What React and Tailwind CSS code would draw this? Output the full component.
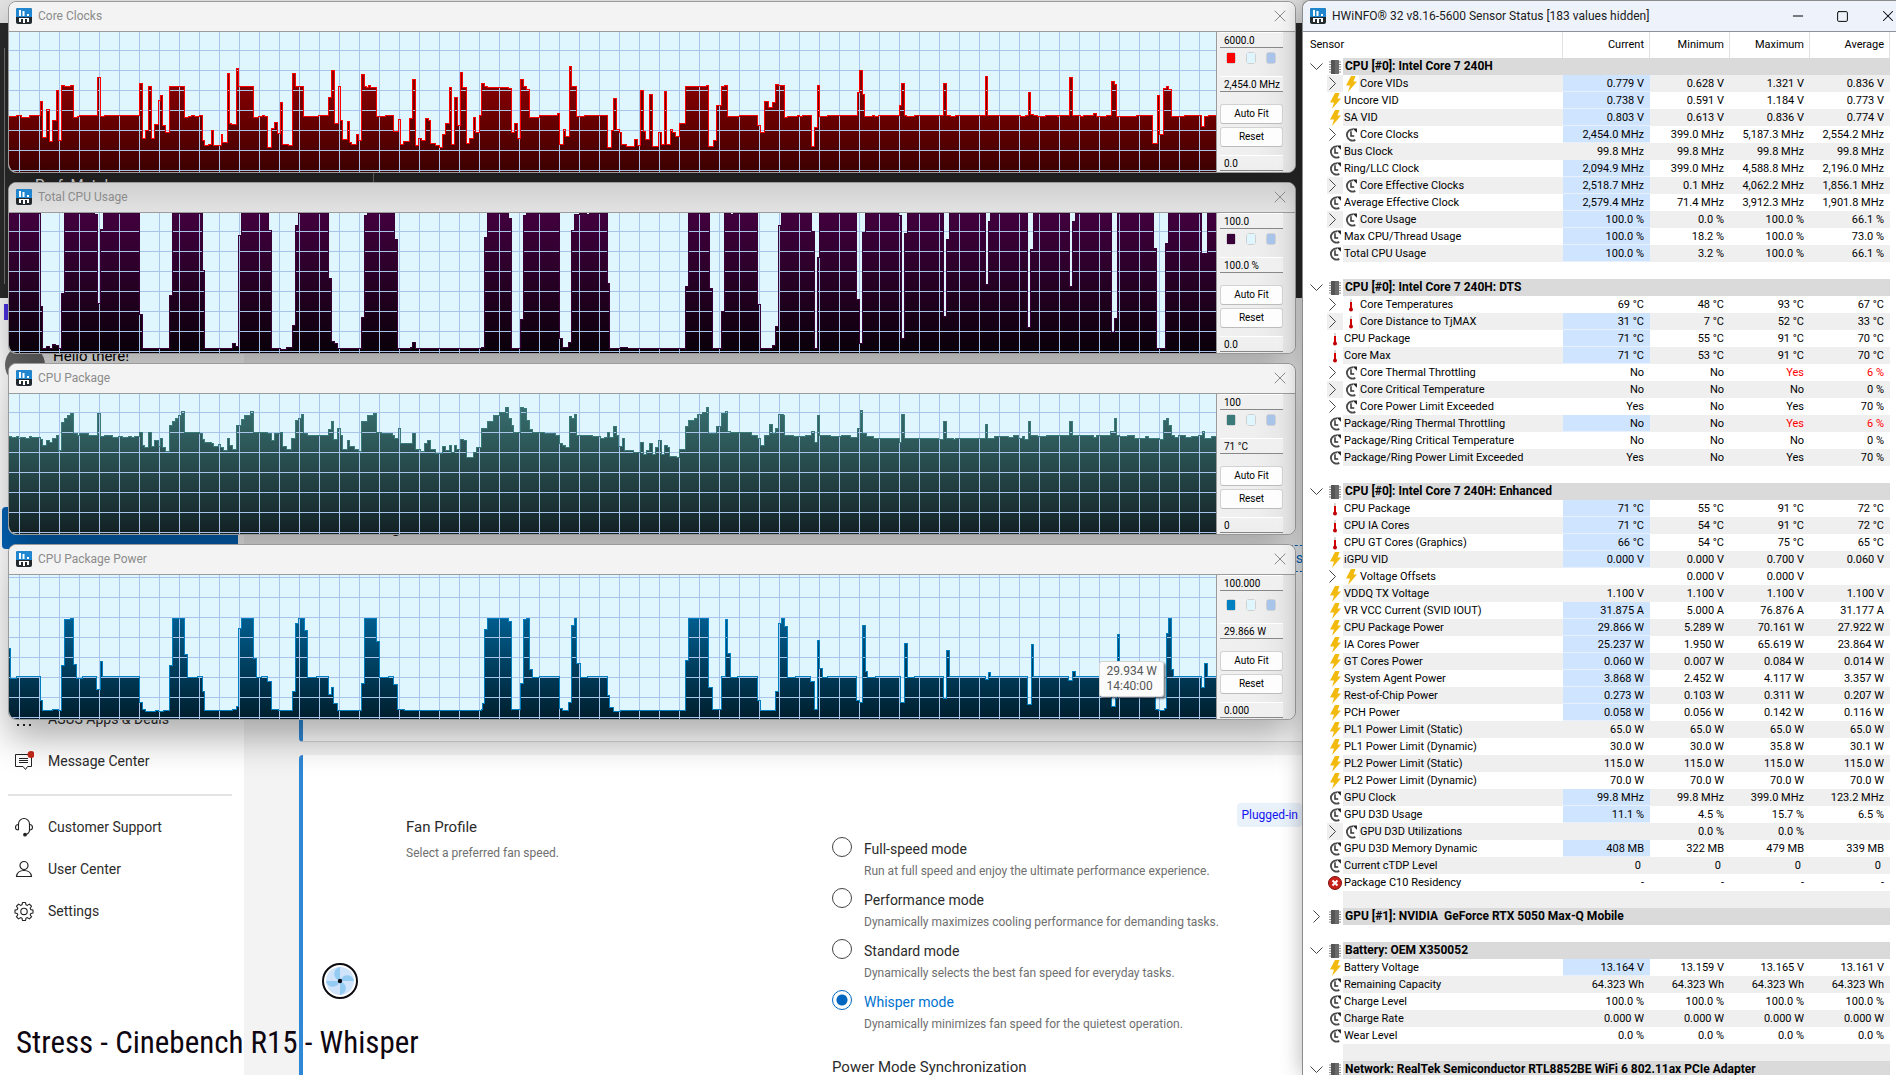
import React from "react";
import { Minus, Square, X } from "lucide-react";

const clocksOld =
  "22,348 38,346 52,350 72,346 98,304 104,412 113,328 119,424 128,361 136,270 142,419 150,256 157,258 172,256 178,352 188,348 194,346 238,232 244,349 256,346 341,250 347,415 356,391 363,259 369,415 378,373 386,301 392,286 398,376 405,397 414,259 450,352 460,349 468,346 476,348 488,346 494,421 501,436 510,433 517,391 523,436 541,403 545,427 555,220 560,370 567,373 577,205 582,259 619,352 631,349 641,346 648,349 655,442 664,385 671,367 678,400 686,307 692,433 706,436 716,220 722,259 743,349 778,346 804,292 812,211 818,370 827,259 832,361 838,418 849,364 854,427 861,433 871,403 876,421 885,222 891,258 896,261 902,256 907,260 920,349 944,346 964,394 974,358 980,433 988,424 1002,355 1010,238 1016,436 1025,415 1032,421 1041,355 1048,361 1053,430 1066,436 1076,440 1083,403 1091,370 1099,262 1104,433 1113,292 1119,376 1127,217 1133,262 1141,430 1150,415 1158,352 1163,397 1173,346 1179,250 1186,258 1192,260 1245,265 1251,397 1260,370 1266,415 1275,238 1281,259 1288,268 1295,352 1303,350 1320,346 1364,338 1369,433 1379,388 1384,409 1393,199 1399,259 1412,349 1430,346 1486,442 1496,391 1503,295 1509,388 1516,397 1522,433 1533,439 1554,418 1560,436";
const clocksNew =
  "0,270 6,394 12,418 21,283 27,439 42,397 48,433 57,274 62,433 71,388 76,397 83,409 92,370 106,259 155,256 160,439 171,421 177,316 190,258 197,256 203,349 232,346 273,376 281,397 289,304 300,322 310,307 317,253 323,256 336,352 345,349 367,346 373,349 380,346 399,439 408,380 415,256 420,349 437,346 507,277 513,211 519,283 525,349 543,346 548,349 557,346 605,316 611,250 617,346 622,349 640,346 709,250 715,346 726,349 738,346 808,229 813,346 890,349 900,346 907,277 912,343 920,346 928,349 948,346 975,349 979,346 1004,232 1010,346 1030,349 1037,346 1061,340 1066,347 1085,349 1090,346 1102,244 1109,253 1115,349 1160,346 1199,430 1209,286 1214,403 1223,265 1230,259 1235,268 1242,349 1272,346 1312,379 1320,349 1328,346 1349,346";

const usageOld =
  "22,637 98,919 104,1043 112,1038 119,1043 127,1033 135,1036 142,1045 150,880 157,637 231,641 238,910 244,687 252,637 341,942 347,1043 414,886 421,637 494,811 501,1043 510,1045 517,1043 568,1030 575,1038 583,706 590,637 657,690 663,1043 685,1046 700,1040 716,976 723,675 730,637 804,835 810,1024 818,1030 826,1043 846,1045 852,1043 885,952 892,645 899,637 965,717 972,1043 1004,1040 1010,1027 1016,1043 1060,1045 1100,1043 1178,1040 1186,711 1193,637 1245,655 1251,1043 1274,957 1281,645 1288,637 1369,1015 1376,1040 1392,1027 1399,690 1406,641 1418,637 1436,641 1443,637 1487,850 1493,1043 1520,1040 1535,1043";
const usageNew =
  "0,1043 106,859 112,637 161,865 168,1043 190,934 197,637 210,641 218,637 273,912 281,1043 308,1036 316,978 323,675 329,637 400,694 407,1043 414,772 420,637 505,898 512,1030 519,697 526,637 604,646 611,1015 618,700 625,637 709,948 715,717 722,637 807,853 814,664 820,637 905,982 913,748 920,637 1004,858 1011,664 1018,637 1102,997 1109,955 1116,637 1201,745 1208,1043 1229,730 1236,637 1312,759 1327,637 1349,637";

const tempOld =
  "22,259 27,262 38,258 44,264 50,261 62,264 70,258 76,262 98,267 104,286 113,271 119,276 127,264 136,256 142,301 150,216 157,205 165,196 172,190 178,250 188,256 194,250 215,256 238,190 244,258 256,256 274,260 283,262 290,258 300,262 313,259 320,262 328,259 341,247 347,286 354,292 363,247 369,289 378,271 386,289 391,265 398,292 405,304 414,226 421,214 429,205 437,195 443,184 450,247 488,250 494,268 501,277 516,280 522,289 533,281 540,290 546,301 555,265 560,286 568,298 577,226 590,207 598,195 613,184 619,247 655,250 663,271 671,250 686,247 692,289 700,298 714,265 723,211 729,205 737,193 743,250 752,256 804,237 811,214 817,268 826,235 832,256 838,298 849,271 855,289 867,298 877,304 885,214 900,195 914,190 920,247 933,250 960,256 965,265 974,235 980,280 1010,250 1016,298 1030,304 1040,280 1047,271 1053,298 1065,309 1084,289 1091,301 1100,286 1106,307 1113,286 1118,298 1127,268 1134,271 1141,321 1158,307 1165,290 1179,235 1193,214 1208,195 1223,187 1237,172 1244,205 1251,226 1258,247 1274,172 1281,175 1288,211 1295,238 1303,247 1333,250 1360,256 1369,278 1376,286 1384,292 1393,199 1399,205 1407,193 1412,256 1450,259 1471,265 1480,262 1487,247 1493,262 1502,229 1508,256 1515,289 1524,265 1530,301 1550,306";
const tempNew =
  "0,277 6,313 15,301 21,280 27,313 36,292 42,271 48,313 57,286 63,292 69,318 85,321 92,298 106,229 113,211 127,205 134,193 146,187 155,172 160,250 177,229 190,190 199,184 203,244 210,247 260,256 273,265 281,286 289,256 303,223 309,250 317,235 323,193 334,196 336,256 358,259 385,256 400,244 406,277 415,196 420,256 445,259 470,256 492,260 507,235 514,181 520,250 530,259 546,265 605,277 611,193 617,265 690,265 697,268 709,214 715,265 732,268 738,265 808,223 813,265 829,259 860,262 872,256 884,265 895,259 899,268 907,214 913,256 930,259 950,256 1004,214 1010,256 1060,262 1066,256 1100,244 1109,205 1115,256 1120,259 1140,256 1155,265 1182,259 1188,265 1215,268 1223,211 1230,205 1235,226 1242,256 1250,262 1258,256 1275,262 1290,259 1305,256 1314,244 1320,265 1335,259 1349,259";

const powerOld =
  "20,895 24,983 38,979 98,1051 104,1081 127,1078 142,1081 150,946 157,808 172,805 178,943 185,983 202,979 236,1018 245,934 251,979 341,1057 347,1077 355,1083 380,1079 386,1083 400,1080 414,946 421,805 450,913 457,982 482,979 494,1024 501,1081 568,1077 577,1067 583,835 590,805 619,925 626,982 640,979 655,993 663,1078 680,1081 716,1024 723,820 730,805 744,841 751,982 775,979 804,1032 811,1010 817,1060 826,1081 885,1000 892,805 920,874 929,982 951,979 963,1003 972,1078 990,1081 1178,1077 1181,1060 1186,838 1193,805 1244,814 1251,1078 1274,1000 1281,808 1288,805 1295,958 1303,982 1320,979 1369,1075 1378,1081 1392,1057 1399,826 1406,805 1412,940 1420,982 1437,979 1486,1036 1493,1072 1502,1083 1518,1081";
const powerNew =
  "0,1081 106,931 112,805 160,1010 168,1078 190,979 198,808 204,910 210,982 226,979 273,1051 281,1081 317,1024 323,820 330,805 336,829 343,982 363,979 398,993 406,1078 414,871 420,955 427,982 438,979 505,1049 512,1057 520,826 526,964 532,982 550,979 608,1057 618,880 624,982 640,979 709,1045 716,901 722,979 807,988 815,967 820,979 905,1063 914,883 920,979 1002,991 1011,964 1018,979 1102,1069 1111,1045 1117,853 1122,979 1206,1078 1213,1081 1225,1075 1230,850 1236,805 1242,958 1248,979 1312,1012 1320,940 1327,979 1349,979";

const charts = [
  {
    id: "clocks",
    title: "Core Clocks",
    older: clocksOld,
    newer: clocksNew,
    offset: 32,
    height: 140,
    gridTop: 18,
    line: "#ff0000",
    top: "#b20000",
    bottom: "#3c0000",
    max: "6000.0",
    value: "2,454.0 MHz",
    min: "0.0",
    bar: "bg-[#f3f3f3]",
  },
  {
    id: "usage",
    title: "Total CPU Usage",
    older: usageOld,
    newer: usageNew,
    offset: 213,
    height: 140,
    gridTop: 18,
    line: "#3a0038",
    top: "#42003e",
    bottom: "#0a000a",
    max: "100.0",
    value: "100.0 %",
    min: "0.0",
    bar: "bg-linear-to-b from-[#d0d0d0] to-[#e2e2e2]",
  },
  {
    id: "temp",
    title: "CPU Package",
    older: tempOld,
    newer: tempNew,
    offset: 44,
    height: 140,
    gridTop: 18,
    line: "#3a7a7a",
    top: "#3c7676",
    bottom: "#132124",
    max: "100",
    value: "71 °C",
    min: "0",
    bar: "bg-[#f3f3f3]",
  },
  {
    id: "power",
    title: "CPU Package Power",
    older: powerOld,
    newer: powerNew,
    offset: 225,
    height: 144,
    gridTop: 2,
    line: "#0080c0",
    top: "#0078b8",
    bottom: "#001e2c",
    max: "100.000",
    value: "29.866 W",
    min: "0.000",
    bar: "bg-[#f3f3f3]",
    tall: true,
    tooltip: ["29.934 W", "14:40:00"],
  },
];

const sensorGroups = [
  {
    name: "CPU [#0]: Intel Core 7 240H",
    open: true,
    rows: [
      ["volt", "Core VIDs", "0.779 V", "0.628 V", "1.321 V", "0.836 V", "child hot"],
      ["volt", "Uncore VID", "0.738 V", "0.591 V", "1.184 V", "0.773 V", "hot"],
      ["volt", "SA VID", "0.803 V", "0.613 V", "0.836 V", "0.774 V", "hot"],
      ["clock", "Core Clocks", "2,454.0 MHz", "399.0 MHz", "5,187.3 MHz", "2,554.2 MHz", "child hot"],
      ["clock", "Bus Clock", "99.8 MHz", "99.8 MHz", "99.8 MHz", "99.8 MHz", ""],
      ["clock", "Ring/LLC Clock", "2,094.9 MHz", "399.0 MHz", "4,588.8 MHz", "2,196.0 MHz", "hot"],
      ["clock", "Core Effective Clocks", "2,518.7 MHz", "0.1 MHz", "4,062.2 MHz", "1,856.1 MHz", "child hot"],
      ["clock", "Average Effective Clock", "2,579.4 MHz", "71.4 MHz", "3,912.3 MHz", "1,901.8 MHz", "hot"],
      ["clock", "Core Usage", "100.0 %", "0.0 %", "100.0 %", "66.1 %", "child hot"],
      ["clock", "Max CPU/Thread Usage", "100.0 %", "18.2 %", "100.0 %", "73.0 %", "hot"],
      ["clock", "Total CPU Usage", "100.0 %", "3.2 %", "100.0 %", "66.1 %", "hot"],
    ],
  },
  {
    name: "CPU [#0]: Intel Core 7 240H: DTS",
    open: true,
    rows: [
      ["temp", "Core Temperatures", "69 °C", "48 °C", "93 °C", "67 °C", "child"],
      ["temp", "Core Distance to TjMAX", "31 °C", "7 °C", "52 °C", "33 °C", "child hot"],
      ["temp", "CPU Package", "71 °C", "55 °C", "91 °C", "70 °C", "hot"],
      ["temp", "Core Max", "71 °C", "53 °C", "91 °C", "70 °C", "hot"],
      ["clock", "Core Thermal Throttling", "No", "No", "Yes", "6 %", "child alert"],
      ["clock", "Core Critical Temperature", "No", "No", "No", "0 %", "child"],
      ["clock", "Core Power Limit Exceeded", "Yes", "No", "Yes", "70 %", "child"],
      ["clock", "Package/Ring Thermal Throttling", "No", "No", "Yes", "6 %", "hot alert"],
      ["clock", "Package/Ring Critical Temperature", "No", "No", "No", "0 %", ""],
      ["clock", "Package/Ring Power Limit Exceeded", "Yes", "No", "Yes", "70 %", ""],
    ],
  },
  {
    name: "CPU [#0]: Intel Core 7 240H: Enhanced",
    open: true,
    rows: [
      ["temp", "CPU Package", "71 °C", "55 °C", "91 °C", "72 °C", "hot"],
      ["temp", "CPU IA Cores", "71 °C", "54 °C", "91 °C", "72 °C", "hot"],
      ["temp", "CPU GT Cores (Graphics)", "66 °C", "54 °C", "75 °C", "65 °C", "hot"],
      ["volt", "iGPU VID", "0.000 V", "0.000 V", "0.700 V", "0.060 V", "hot"],
      ["volt", "Voltage Offsets", "", "0.000 V", "0.000 V", "", "child"],
      ["volt", "VDDQ TX Voltage", "1.100 V", "1.100 V", "1.100 V", "1.100 V", ""],
      ["volt", "VR VCC Current (SVID IOUT)", "31.875 A", "5.000 A", "76.876 A", "31.177 A", "hot"],
      ["volt", "CPU Package Power", "29.866 W", "5.289 W", "70.161 W", "27.922 W", "hot"],
      ["volt", "IA Cores Power", "25.237 W", "1.950 W", "65.619 W", "23.864 W", "hot"],
      ["volt", "GT Cores Power", "0.060 W", "0.007 W", "0.084 W", "0.014 W", "hot"],
      ["volt", "System Agent Power", "3.868 W", "2.452 W", "4.117 W", "3.357 W", "hot"],
      ["volt", "Rest-of-Chip Power", "0.273 W", "0.103 W", "0.311 W", "0.207 W", "hot"],
      ["volt", "PCH Power", "0.058 W", "0.056 W", "0.142 W", "0.116 W", "hot"],
      ["volt", "PL1 Power Limit (Static)", "65.0 W", "65.0 W", "65.0 W", "65.0 W", ""],
      ["volt", "PL1 Power Limit (Dynamic)", "30.0 W", "30.0 W", "35.8 W", "30.1 W", ""],
      ["volt", "PL2 Power Limit (Static)", "115.0 W", "115.0 W", "115.0 W", "115.0 W", ""],
      ["volt", "PL2 Power Limit (Dynamic)", "70.0 W", "70.0 W", "70.0 W", "70.0 W", ""],
      ["clock", "GPU Clock", "99.8 MHz", "99.8 MHz", "399.0 MHz", "123.2 MHz", "hot"],
      ["clock", "GPU D3D Usage", "11.1 %", "4.5 %", "15.7 %", "6.5 %", "hot"],
      ["clock", "GPU D3D Utilizations", "", "0.0 %", "0.0 %", "", "child"],
      ["clock", "GPU D3D Memory Dynamic", "408 MB", "322 MB", "479 MB", "339 MB", "hot"],
      ["clock", "Current cTDP Level", "0", "0", "0", "0", "unitless"],
      ["error", "Package C10 Residency", "-", "-", "-", "-", ""],
    ],
  },
  { name: "GPU [#1]: NVIDIA  GeForce RTX 5050 Max-Q Mobile", open: false, rows: [] },
  {
    name: "Battery: OEM X350052",
    open: true,
    rows: [
      ["volt", "Battery Voltage", "13.164 V", "13.159 V", "13.165 V", "13.161 V", "hot"],
      ["clock", "Remaining Capacity", "64.323 Wh", "64.323 Wh", "64.323 Wh", "64.323 Wh", ""],
      ["clock", "Charge Level", "100.0 %", "100.0 %", "100.0 %", "100.0 %", ""],
      ["clock", "Charge Rate", "0.000 W", "0.000 W", "0.000 W", "0.000 W", ""],
      ["clock", "Wear Level", "0.0 %", "0.0 %", "0.0 %", "0.0 %", ""],
    ],
  },
  {
    name: "Network: RealTek Semiconductor RTL8852BE WiFi 6 802.11ax PCIe Adapter",
    open: true,
    rows: [],
  },
];

const fanModes = [
  ["Full-speed mode", "Run at full speed and enjoy the ultimate performance experience."],
  ["Performance mode", "Dynamically maximizes cooling performance for demanding tasks."],
  ["Standard mode", "Dynamically selects the best fan speed for everyday tasks."],
  ["Whisper mode", "Dynamically minimizes fan speed for the quietest operation."],
];

const AppLogo = () => (
  <svg viewBox="0 0 16 16" className="w-4 h-4 shrink-0" aria-hidden="true">
    <rect width="16" height="16" rx="2" fill="#22292f" />
    <path d="M2 0h12a2 2 0 0 1 2 2v7H0V2a2 2 0 0 1 2-2z" fill="#1f86cf" />
    <path d="M3 2h2v6H3zM6.500 3h2v5h-2zM11 6h2v2h-2z" fill="#fff" />
    <path d="M3 10h2v4H3zM7 10h2v5H7zM11 10h2v4h-2zM3 10h10v1H3z" fill="#fff" />
  </svg>
);

const BoltIcon = () => (
  <svg viewBox="0 0 12 16" className="w-3 h-4" aria-hidden="true">
    <path d="M6 0h4.500L8.500 5.500H12L3 16l2-6.500H1z" fill="#f2b90f" />
  </svg>
);

const ClockIcon = () => (
  <svg viewBox="0 0 13 13" className="w-3.5 h-3.5" aria-hidden="true">
    <path d="M8.500 1.300A5.200 5.200 0 1 0 10.500 11" fill="none" stroke="#4a4a4a" strokeWidth="1.700" />
    <path d="M6.500 3v4.500h3" fill="none" stroke="#333" strokeWidth="1.400" />
    <path d="M8 .500h4v3.800z" fill="#222" />
  </svg>
);

const TempIcon = () => (
  <svg viewBox="0 0 6 14" className="w-1.5 h-3.5" aria-hidden="true">
    <path d="M2 1h2v4H2z" fill="#d8d8d8" />
    <path d="M2 4h2v7H2z" fill="#d40000" />
    <circle cx="3" cy="11.500" r="2" fill="#c00000" />
  </svg>
);

const ErrorIcon = () => (
  <svg viewBox="0 0 14 14" className="w-3.5 h-3.5" aria-hidden="true">
    <circle cx="7" cy="7" r="6.500" fill="#c8201a" stroke="#7d1410" />
    <path d="M4.500 4.500l5 5M9.500 4.500l-5 5" stroke="#fff" strokeWidth="2" />
  </svg>
);

const ChipIcon = () => (
  <svg viewBox="0 0 12 14" className="w-3 h-3.5" aria-hidden="true">
    <path d="M0 2h12M0 4.500h12M0 7h12M0 9.500h12M0 12h12" stroke="#8a8a8a" />
    <rect x="2" width="8" height="14" fill="#555" />
    <rect x="6" width="4" height="14" fill="#6a6a6a" />
  </svg>
);

const Collapsed = () => (
  <svg viewBox="0 0 7 13" className="w-[7px] h-[13px]" fill="none" stroke="#444" aria-hidden="true">
    <path d="M.500.500l6 6-6 6" />
  </svg>
);

const Expanded = () => (
  <svg viewBox="0 0 13 7" className="w-[13px] h-[7px]" fill="none" stroke="#444" aria-hidden="true">
    <path d="M.500.500l6 6 6-6" />
  </svg>
);

const rowIcons = {
  volt: <BoltIcon />,
  clock: <ClockIcon />,
  temp: <TempIcon />,
  error: <ErrorIcon />,
};

const parse = (text, toX, offset) =>
  text.split(" ").map((pair) => {
    const [x, y] = pair.split(",").map(Number);
    return [Math.round(toX(x)), Math.max(0, Math.round(y / 3 - offset))];
  });

const Plot = ({ chart }) => {
  const width = 1207;
  const { height, gridTop } = chart;
  const points = [
    ...parse(chart.older, (x) => x / 2.45 - 9, chart.offset),
    ...parse(chart.newer, (x) => x / 2.34 + 631, chart.offset),
  ];
  const d = points.map(([x, y], i) => (i ? `H${x}V${y}` : `M${x} ${y}`)).join("");

  const columns = Array.from({ length: 60 }, (_, i) => 10 + i * 20);
  const lines = Array.from({ length: 8 }, (_, i) => gridTop + i * 20).filter((y) => y < height);

  return (
    <svg
      viewBox={`0 0 ${width} ${height}`}
      preserveAspectRatio="none"
      shapeRendering="crispEdges"
      className={chart.tall ? "block w-full h-36" : "block w-full h-[140px]"}
      role="img"
      aria-label={chart.title}
    >
      <defs>
        <linearGradient id={chart.id} gradientUnits="userSpaceOnUse" x1="0" y1="0" x2="0" y2={height}>
          <stop offset="0" stopColor={chart.top} />
          <stop offset="1" stopColor={chart.bottom} />
        </linearGradient>
      </defs>
      <rect width={width} height={height} fill="#dff6ff" />
      <path d={`${d}V${height}H0Z`} fill={`url(#${chart.id})`} />
      {columns.map((x) => (
        <rect key={x} x={x} width="1" height={height} fill="#a9c4ea" />
      ))}
      {lines.map((y) => (
        <rect key={y} y={y} width={width} height="1" fill="#a9c4ea" />
      ))}
      <path d={d} fill="none" stroke={chart.line} />
    </svg>
  );
};

const Field = ({ label, value }) => (
  <input
    readOnly
    aria-label={label}
    defaultValue={value}
    className="block w-full h-4 pl-1 bg-[#f0f0f0] border-t border-t-white border-b border-b-[#888] text-[10px] leading-3 text-black"
  />
);

const Swatch = ({ label, color }) => (
  <button
    type="button"
    aria-label={label}
    className="w-2.5 h-3 rounded-[3px] border border-[#d0d0d0] bg-white"
  >
    <span className="block w-full h-full" style={{ backgroundColor: color }} />
  </button>
);

const PanelButton = ({ children }) => (
  <button
    type="button"
    className="h-5 w-full rounded-[3px] border border-[#d2d2d2] border-b-[#bcbcbc] bg-[#fdfdfd] text-[10px] leading-4 text-black"
  >
    {children}
  </button>
);

const ChartWindow = ({ chart }) => (
  <section className="relative rounded-lg border border-[#9b9b9b] bg-[#f0f0f0] font-['Roboto',sans-serif] shadow-[0_18px_36px_rgba(0,0,0,0.32)]">
    <header className={`flex items-center h-[30px] pb-0.5 pl-[7px] pr-[5px] rounded-t-lg border-b border-[#9c9c9c] ${chart.bar}`}>
      <AppLogo />
      <h2 className="ml-1.5 flex-1 text-[12px] text-[#8b8b8b]">{chart.title}</h2>
      <button type="button" aria-label={`Close ${chart.title}`} className="text-[#8b8b8b]">
        <X size={20} strokeWidth={1.2} />
      </button>
    </header>
    <div className="flex rounded-b-lg overflow-hidden">
      <div className="flex-1 min-w-0 border-r border-[#9b9b9b]">
        <Plot chart={chart} />
      </div>
      <div className="w-[78px] pl-[3px] pr-3 bg-linear-to-r from-[#f0f0f0] via-[#efefef] to-[#e2e2e2]">
        <Field label="Maximum" value={chart.max} />
        <div className={`flex gap-2.5 pl-1.5 ${chart.tall ? "mt-2" : "mt-1"}`}>
          <Swatch label="Line colour" color={chart.line} />
          <Swatch label="Background colour" color="#dff6ff" />
          <Swatch label="Grid colour" color="#a9c4ea" />
        </div>
        <div className="mt-3">
          <Field label="Current value" value={chart.value} />
        </div>
        <div className="mt-3 flex flex-col gap-[3px]">
          <PanelButton>Auto Fit</PanelButton>
          <PanelButton>Reset</PanelButton>
        </div>
        <div className="mt-2">
          <Field label="Minimum" value={chart.min} />
        </div>
      </div>
    </div>
    {chart.tooltip && (
      <div
        role="tooltip"
        className="absolute top-[116px] right-[131px] px-1.5 py-0.5 rounded-[3px] border border-[#d5d5d5] bg-[#fbfbfb] shadow-[2px_2px_2px_rgba(0,0,0,0.45)] text-[12px] leading-[15px] text-[#575757]"
      >
        {chart.tooltip.map((line) => (
          <p key={line}>{line}</p>
        ))}
      </div>
    )}
  </section>
);

const DotsIcon = () => (
  <svg viewBox="0 0 18 18" className="w-[18px] h-[18px]" fill="#222" aria-hidden="true">
    {[2, 8, 14].map((y) => [2, 8, 14].map((x) => <rect key={`${x}${y}`} x={x} y={y} width="2" height="2" />))}
  </svg>
);

const MessageIcon = () => (
  <svg viewBox="0 0 20 20" className="w-5 h-5" fill="none" stroke="#222" aria-hidden="true">
    <path d="M1.500 3.500h16v12h-4l-2 3-2.500-3H1.500z" />
    <path d="M5 7.500h9M5 9.500h9M5 11.500h9" />
    <circle cx="17" cy="3.500" r="3.500" fill="#c42b1c" stroke="none" />
  </svg>
);

const HeadsetIcon = () => (
  <svg viewBox="0 0 20 20" className="w-5 h-5" fill="none" stroke="#222" strokeWidth="1.100" aria-hidden="true">
    <path d="M4.500 13V7a5.500 5.500 0 0 1 11 0v6c0 2.500-1.500 4-4 4.500" />
    <path d="M4.500 7.500C2 7.500 1.500 9 1.500 10.500S2 13 4.500 13M15.500 7.500c2.500 0 3 1.500 3 3s-.500 2.500-3 2.500" />
    <circle cx="11" cy="17.700" r="1.300" fill="#222" />
  </svg>
);

const PersonIcon = () => (
  <svg viewBox="0 0 20 20" className="w-5 h-5" fill="none" stroke="#222" strokeWidth="1.200" aria-hidden="true">
    <circle cx="10" cy="6.500" r="4" />
    <path d="M2.500 17.500c.500-4 3-6 7.500-6s7 2 7.500 6z" />
  </svg>
);

const GearIcon = () => (
  <svg viewBox="0 0 20 20" className="w-5 h-5" fill="none" stroke="#222" strokeWidth="1.100" strokeLinejoin="round" aria-hidden="true">
    <path d="M8.500 1.500h3l.500 2.300 1.400.600 2-1.300 2.100 2.100-1.300 2 .600 1.400 2.200.400v3l-2.200.500-.600 1.300 1.300 2-2.100 2.100-2-1.300-1.400.600-.500 2.300h-3l-.500-2.300-1.400-.600-2 1.300-2.100-2.100 1.300-2-.600-1.300L1 12V9l2.200-.400.600-1.400-1.300-2 2.100-2.100 2 1.300L8 3.800z" />
    <circle cx="10" cy="10.400" r="3.200" />
  </svg>
);

const FanIcon = () => (
  <svg viewBox="0 0 36 36" className="w-9 h-9" aria-hidden="true">
    <circle cx="18" cy="18" r="17" fill="#fff" stroke="#0b0b12" strokeWidth="2" />
    <circle cx="18" cy="18" r="14" fill="#cfe3fb" />
    <g fill="#93cbf2">
      <path d="M18 18V4c-5 1-7 6-5 10 1 2 3 3 5 4z" />
      <path d="M18 18h14c-1-5-6-7-10-5-2 1-3 3-4 5z" />
      <path d="M18 18v14c5-1 7-6 5-10-1-2-3-3-5-4z" />
      <path d="M18 18H4c1 5 6 7 10 5 2-1 3-3 4-5z" />
    </g>
    <circle cx="18" cy="18" r="2.200" fill="#0b0b12" />
  </svg>
);

const NavLink = ({ icon, children }) => (
  <a href="#" className="flex items-center h-[42px] pl-3.5 text-[#2b2b2b]">
    <span className="w-5 flex justify-center">{icon}</span>
    <span className="ml-3.5">{children}</span>
  </a>
);

const Sidebar = () => (
  <aside className="w-[244px] shrink-0 bg-white text-[14px]">
    <div className="pt-1.5 pl-1 h-[22px]">
      <span className="block w-4 h-4 bg-[#4a32e6]" />
    </div>
    <div className="flex items-end h-[65px] pl-[5px]">
      <span className="w-10 h-10 rounded-full bg-[#6c6c6c]" />
      <span className="ml-2 pb-[18px] text-[15px] text-black">Hello there!</span>
    </div>
    <a href="#" aria-label="Device Settings" className="block mt-[122px] ml-0.5 mr-1.5 h-[42px] rounded bg-[#0063b8]" />
    <nav className="mt-[149px]">
      <NavLink icon={<DotsIcon />}>ASUS Apps &amp; Deals</NavLink>
      <NavLink icon={<MessageIcon />}>Message Center</NavLink>
      <hr className="mt-3 mb-2.5 ml-2 mr-3 border-0 h-0.5 bg-[#e3e3e3]" />
      <NavLink icon={<HeadsetIcon />}>Customer Support</NavLink>
      <NavLink icon={<PersonIcon />}>User Center</NavLink>
      <NavLink icon={<GearIcon />}>Settings</NavLink>
    </nav>
  </aside>
);

const FanProfile = () => (
  <div className="flex flex-1 mt-[13px] rounded-tl border-l-4 border-[#2f88d6] bg-white pt-12">
    <div className="w-[529px] shrink-0">
      <div className="pl-[103px] pt-3">
        <h3 className="text-[15px] leading-6 text-[#2b2b2b]">Fan Profile</h3>
        <p className="mt-1 text-[12px] leading-5 text-[#6f6f6f]">Select a preferred fan speed.</p>
      </div>
      <div className="mt-[100px] pl-[19px]">
        <FanIcon />
      </div>
    </div>
    <fieldset className="flex-1 min-w-0 pt-[34px]">
      <legend className="sr-only">Fan Profile</legend>
      {fanModes.map(([name, text], i) => (
        <label key={name} className="grid grid-cols-[20px_1fr] gap-x-3 h-[51px] content-start">
          <input
            type="radio"
            name="fan"
            defaultChecked={i === 3}
            className="peer appearance-none w-5 h-5 rounded-full border border-[#444] bg-white checked:border-[#0067c0] checked:bg-[radial-gradient(circle,#0067c0_5px,#fff_6px)]"
          />
          <span className="text-[14px] leading-6 text-[#2b2b2b] peer-checked:text-[#0072d0]">{name}</span>
          <span className="col-start-2 text-[12px] leading-5 text-[#6f6f6f] whitespace-nowrap">{text}</span>
        </label>
      ))}
      <h3 className="mt-3.5 text-[15px] leading-6 text-[#2b2b2b]">Power Mode Synchronization</h3>
    </fieldset>
    <span className="h-6 px-1 rounded bg-[#e9f1fb] text-[12px] leading-6 text-[#1414f0] whitespace-nowrap">Plugged-in</span>
  </div>
);

const Desktop = () => (
  <div className="flex flex-col h-full font-['Roboto',sans-serif]">
    <div className="h-[298px] shrink-0 pt-[25px] pl-1 bg-[#2b2b2b] border-t-[23px] border-[#e4e4e4]">
      <div className="h-[236px] pt-[125px] pl-[30px] border-l border-[#777]">
        <p className="w-[339px] border-r border-[#777] text-[15px] leading-6 text-white">Perf. Metal</p>
      </div>
    </div>
    <div className="flex flex-1 min-h-0 overflow-hidden">
      <Sidebar />
      <div className="w-[55px] shrink-0 bg-[#f3f3f3]" />
      <main className="flex flex-col flex-1 min-w-0 bg-[#f3f3f3]">
        <h2 className="pt-[216px] pl-1.5 h-[241px] shrink-0 text-[16px] leading-7 font-medium text-black">Quick Setting</h2>
        <div className="h-[197px] mt-1.5 shrink-0 rounded-bl border-l-4 border-b border-l-[#2f88d6] border-b-[#d5d5d5] bg-white">
          <button
            type="button"
            className="block ml-auto -mr-4 h-[27px] pl-10 pr-0.5 border border-dashed border-[#0067c0] bg-[#eef4fa] text-[14px] text-[#0067c0]"
          >
            Reset
          </button>
        </div>
        <FanProfile />
      </main>
    </div>
  </div>
);

const SensorRow = ({ row, striped }) => {
  const [icon, label, current, minimum, maximum, average, flags] = row;
  const child = flags.includes("child");
  const alert = flags.includes("alert");
  const pad = flags.includes("unitless") ? "pr-[9px]" : "pr-1.5";
  const stripe = striped ? "bg-[#efefef]" : "bg-white";

  return (
    <tr className="h-[17px]">
      <th scope="row" className="p-0 font-normal text-left">
        <div className="flex h-[17px] pl-6">
          {child && (
            <span className={`w-4 flex items-center pl-0.5 ${stripe}`}>
              <Collapsed />
            </span>
          )}
          <span className="w-4 flex items-center justify-center bg-white">{rowIcons[icon]}</span>
          <span className={`flex-1 pl-px leading-[17px] whitespace-nowrap ${stripe}`}>{label}</span>
        </div>
      </th>
      <td className={`py-0 text-right ${pad} ${flags.includes("hot") ? "bg-[#cfe4ff] shadow-[inset_0_-1px_0_#e8f1fb]" : stripe}`}>{current}</td>
      <td className={`py-0 text-right ${pad} ${stripe}`}>{minimum}</td>
      <td className={`py-0 text-right ${pad} ${stripe} ${alert ? "text-[#ff0000]" : ""}`}>{maximum}</td>
      <td className={`py-0 text-right ${pad} ${stripe} ${alert ? "text-[#ff0000]" : ""}`}>{average}</td>
      <td />
    </tr>
  );
};

const GroupRow = ({ group }) => (
  <tr className="h-[17px]">
    <th scope="rowgroup" colSpan={5} className="p-0 font-bold text-left">
      <div className="flex h-[17px]">
        <span className={`w-6 flex items-center ${group.open ? "pl-[7px]" : "pl-2.5"}`}>
          {group.open ? <Expanded /> : <Collapsed />}
        </span>
        <span className="w-4 flex items-center justify-center">
          <ChipIcon />
        </span>
        <span className="flex-1 pl-0.5 text-[12px] leading-[17px] whitespace-pre bg-[#dadada]">{group.name}</span>
      </div>
    </th>
    <td />
  </tr>
);

const SpacerRow = ({ striped }) => (
  <tr className="h-[17px]">
    <td colSpan={5} className="p-0">
      <div className={`ml-10 h-[17px] ${striped ? "bg-[#efefef]" : "bg-white"}`} />
    </td>
    <td />
  </tr>
);

const SensorTable = () => {
  let index = 0;

  return (
    <table className="w-full table-fixed border-separate border-spacing-0 text-[11px] leading-4 text-black">
      <colgroup>
        <col />
        <col className="w-[87px]" />
        <col className="w-20" />
        <col className="w-20" />
        <col className="w-20" />
        <col className="w-1.5" />
      </colgroup>
      <thead>
        <tr className="h-[26px]">
          <th scope="col" className="py-0 pl-[7px] font-normal text-left border-r border-[#e2e2e2]">Sensor</th>
          {["Current", "Minimum", "Maximum", "Average"].map((name) => (
            <th key={name} scope="col" className="py-0 pr-[5px] font-normal text-right border-r border-[#e2e2e2]">
              {name}
            </th>
          ))}
          <td />
        </tr>
      </thead>
      <tbody>
        {sensorGroups.map((group, g) => {
          // the collapsed GPU group shifts the striping of what follows
          const odd = g > 3 ? 0 : 1;
          index += 1;
          const rows = group.rows.map((row) => {
            const striped = index % 2 === odd;
            index += 1;
            return <SensorRow key={row[1]} row={row} striped={striped} />;
          });
          const spacerStriped = index % 2 === odd && g !== 3;
          index += 1;
          return (
            <React.Fragment key={group.name}>
              <GroupRow group={group} />
              {rows}
              {g < sensorGroups.length - 1 && <SpacerRow striped={spacerStriped} />}
            </React.Fragment>
          );
        })}
      </tbody>
    </table>
  );
};

const SensorWindow = () => (
  <section className="relative flex flex-col w-[594px] shrink-0 rounded-tl-lg border-l border-t border-[#8c8c8c] bg-white font-['Roboto',sans-serif] shadow-[0_0_22px_rgba(0,0,0,0.3)]">
    <header className="flex items-center h-[31px] shrink-0 pl-[7px] rounded-tl-lg bg-[#eef3fb] border-b border-[#8c939c]">
      <AppLogo />
      <h1 className="ml-1.5 flex-1 text-[12px] text-[#1a1a1a] whitespace-nowrap">
        HWiNFO® 32 v8.16-5600 Sensor Status [183 values hidden]
      </h1>
      <div className="flex items-center gap-[30px] -mr-px text-black">
        <button type="button" aria-label="Minimize">
          <Minus size={16} strokeWidth={1.5} />
        </button>
        <button type="button" aria-label="Maximize">
          <Square size={13} strokeWidth={1.8} />
        </button>
        <button type="button" aria-label="Close">
          <X size={18} strokeWidth={1.4} />
        </button>
      </div>
    </header>
    <SensorTable />
  </section>
);

const App = () => {
  return (
    <div className="flex h-screen overflow-hidden bg-[#dcdcdc]">
      <div className="relative flex-1 min-w-0">
        <Desktop />
        <div className="absolute top-px left-2 right-1.5 flex flex-col gap-[9px]">
          {charts.map((chart) => (
            <ChartWindow key={chart.id} chart={chart} />
          ))}
        </div>
        <p className="absolute left-4 bottom-2 font-['Roboto_Condensed','Roboto',sans-serif] text-[31px] leading-[48px] text-[#0e0610]">
          Stress - Cinebench R15 - Whisper
        </p>
      </div>
      <SensorWindow />
    </div>
  );
};

export default App;
